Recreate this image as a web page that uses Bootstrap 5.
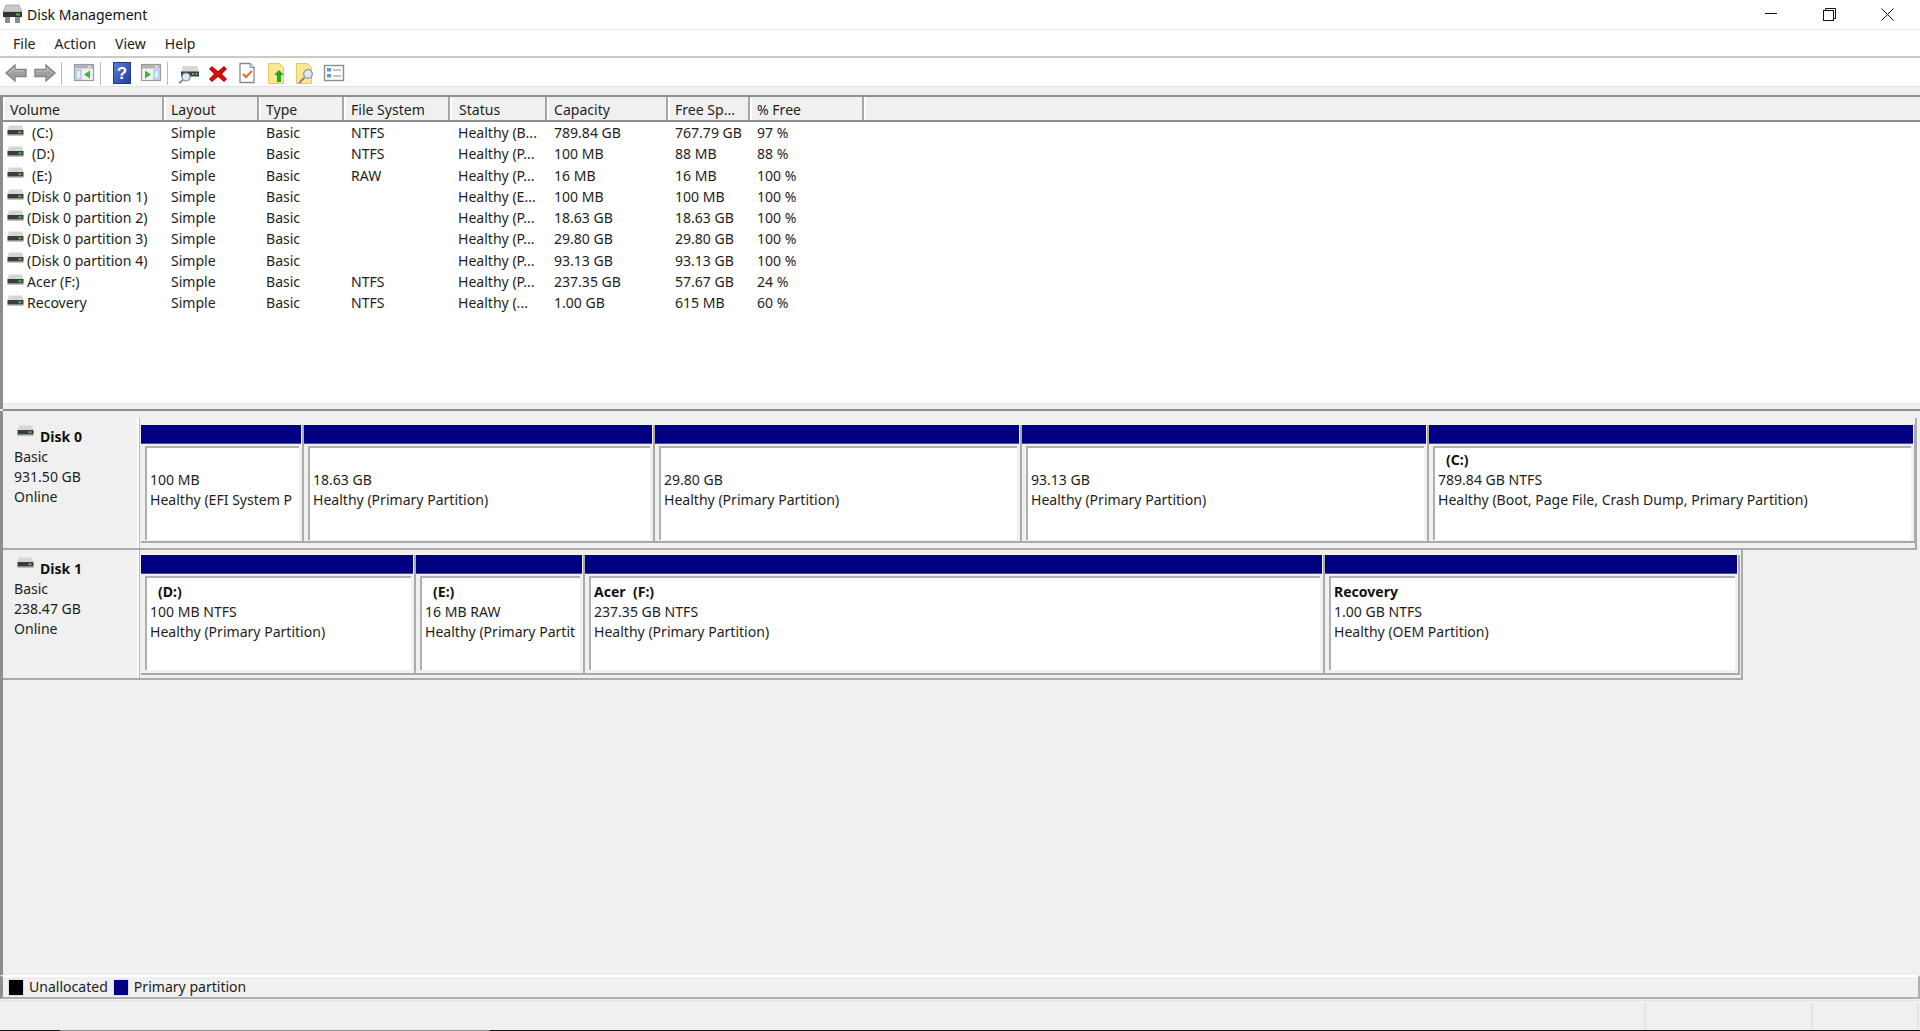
<!DOCTYPE html>
<html lang="en">
<head>
<meta charset="utf-8">
<title>Disk Management</title>
<link href="https://cdn.jsdelivr.net/npm/bootstrap@5.3.0/dist/css/bootstrap.min.css" rel="stylesheet">
<style>
html,body{height:100%;margin:0}
body{width:1920px;height:1031px;overflow:hidden;background:#f0f0f0;font-family:"Noto Sans","Open Sans",sans-serif;font-size:14.05px;color:#1e1e1e;line-height:20px}
.titlebar{height:30px;background:#fff;border-bottom:1px solid #e8e8e8;position:relative;padding-left:27px;line-height:29px;color:#111}
.appicon{position:absolute;left:2px;top:4px}
.winctl{position:absolute;top:0;right:4px;height:29px}
.winctl span{width:58px;display:flex;justify-content:center;align-items:center;height:28px}
.menubar{height:28px;background:#fff;border-bottom:2px solid #c9c9c9;padding-left:13px;gap:19px;line-height:27px}
.toolbar{height:29px;background:#fff;border-bottom:1px solid #e2e2e2;padding-left:4px;padding-top:2px;gap:5px}
.toolbar svg{width:24px;height:24px;flex:none}
.tsep{width:1px;height:23px;background:#bcbcbc;margin:0 4px 0 -1px;flex:none}
.tsep1{margin-right:5px}
.gapband{height:8px;background:#f0f0f0}
.listpane{height:314px;background:#fff;border-left:3px solid #8e8e8e;border-top:2px solid #8e8e8e;overflow:hidden}
.voltable{table-layout:fixed;width:1917px;margin:0;--bs-table-bg:transparent;--bs-table-color:#1e1e1e;color:#1e1e1e;font-size:14.05px;background:#fff}
.voltable th{font-weight:400;background:#f0f0f0;height:24px;padding:2px 0 0 7px;border:0;border-right:2px solid #a6a6a6;border-bottom:2px solid #8e8e8e;box-shadow:inset 2px 0 0 #fff;line-height:20px;white-space:nowrap;overflow:hidden}
.voltable th:last-child{border-right:0}
.voltable td{padding:0 0 0 8px;height:21.3px;line-height:21.3px;border:0;white-space:nowrap;overflow:hidden}
.voltable th:nth-child(5),.voltable td:nth-child(5){padding-left:9px}
.voltable td:first-child{padding-left:7px}
.volcell{display:flex;align-items:center;margin-left:-3px}
.volcell svg{flex:none;width:17px;height:11px;margin-top:-5px}
.vn1{margin-left:8px}
.vn2{margin-left:3px}
.listfill{height:6px;background:#f0f0f0;border-top:1px solid #e6e6e6}
.splitline{height:2px;background:#8e8e8e;margin-left:3px}
.graphpane{height:564px;border-left:3px solid #8e8e8e;background:#f0f0f0;padding-top:7px;overflow:hidden}
.dskrow{height:132px;border-bottom:2px solid #aaa;border-right:2px solid #aaa;display:flex}
.dskrow+.dskrow{height:130px}
.wfull{width:1914px}
.wpart{width:1740px}
.dsklabel{width:136px;flex:none;padding:9px 0 0 11px;border-right:2px solid #fff;box-shadow:1px 0 0 #b8b8b8;line-height:20px}
.dskname{font-weight:700;padding-left:26px;position:relative;display:block;color:#111}
.dskname svg{position:absolute;left:3px;top:-2px;width:17px;height:11px}
.partwrap{display:flex;padding-top:7px;margin-left:2px;margin-bottom:5px;border-bottom:2px solid #aaa}
.dskrow+.dskrow .partwrap{padding-top:5px;margin-bottom:3px}
.volpart{flex:none;border-right:2px solid #ababab;padding-right:1px;background:#f0f0f0;overflow:hidden}
.volbar{height:19px;background:#000080;border-bottom:1px solid #555}
.volbody{margin:2px 2px 3px 4px;height:94px;background:#fff;border-top:2px solid #b0b0b0;border-left:2px solid #b0b0b0;padding:2px 0 0 3px;white-space:nowrap}
.dskrow+.dskrow .volbody{padding-top:4px}
.pname{font-weight:700;display:block;height:20px;color:#111}
.pind{padding-left:8px}
.legendbar{height:24px;background:#f0f0f0;border-top:2px solid #fff;border-bottom:2px solid #b0b0b0;border-left:3px solid #8e8e8e;border-right:2px solid #b0b0b0;padding-left:6px;line-height:20px}
.swatch{width:14px;height:15px;flex:none;margin-right:6px;outline:1px solid #ddd}
.swblack{background:#000}
.swnavy{background:#000080;margin-left:6px}
.statusbar{height:31px;margin-top:1px;border-top:1px solid #e4e4e4;background:#f0f0f0;position:relative}
.stcell{border-right:2px solid #e4e4e4;height:26px;margin-top:2px}
.stmain{width:1646px}
.stmid{width:167px}
.stend{width:106px}
.edgeline{position:absolute;left:0;right:0;bottom:0;height:1px;background:#111}
.edgegap{position:absolute;left:60px;width:430px;bottom:0;height:1px;background:#8a8a8a}
</style>
</head>
<body>
<svg width="0" height="0" class="d-block" aria-hidden="true">
<defs>
<symbol id="drv" viewBox="0 0 17 11">
<path d="M2 0.5h13l1.5 4.5H0.5z" fill="#d6d6d6"/>
<rect x="0.5" y="5" width="16" height="4.6" fill="#3c3c3c"/>
<rect x="11.5" y="6.3" width="3" height="2" fill="#44c23c"/>
<rect x="0.5" y="9.6" width="16" height="1" fill="#9a9a9a"/>
</symbol>
<symbol id="win" viewBox="0 0 24 24">
<rect x="2.500" y="3.500" width="19" height="16" fill="#f2f2f2" stroke="#9c9c9c" stroke-width="1.200"/>
<rect x="3" y="4" width="18" height="3.500" fill="#b4b4b4"/>
</symbol>
<linearGradient id="helpg" x1="0" y1="0" x2="1" y2="1"><stop offset="0" stop-color="#5a82dc"/><stop offset="1" stop-color="#1f3a9a"/></linearGradient>
</defs>
</svg>

<div class="titlebar">
<svg class="appicon" width="21" height="20" viewBox="0 0 21 20"><path d="M4 1h13l3 7H1z" fill="#c9c9c9" stroke="#8a8a8a" stroke-width=".6"/><rect x="1" y="8" width="19" height="5" fill="#333"/><rect x="14" y="9.500" width="4" height="2" fill="#48c040"/><path d="M3 13h5v6H3zM13 13h5v6h-5z" fill="#8c8c8c"/></svg>
Disk Management
<div class="winctl d-flex">
<span><svg width="12" height="2" viewBox="0 0 12 2"><rect width="12" height="1" fill="#111"/></svg></span>
<span><svg width="13" height="13" viewBox="0 0 13 13" fill="none" stroke="#111"><rect x=".5" y="2.500" width="10" height="10"/><path d="M2.500 2.500V.5h10v10h-2"/></svg></span>
<span><svg width="13" height="13" viewBox="0 0 13 13" fill="none" stroke="#111"><path d="M.5.5l12 12M12.500.5l-12 12"/></svg></span>
</div>
</div>

<nav class="menubar d-flex">
<span>File</span><span>Action</span><span>View</span><span>Help</span>
</nav>

<div class="toolbar d-flex align-items-center">
<svg viewBox="0 0 24 24"><path d="M2 12l9-8v4.500h11v7H11V20z" fill="#a0a0a0" stroke="#858585" stroke-width="1.400"/><path d="M5 12l5-5v3h10" fill="none" stroke="#c4c4c4"/></svg>
<svg viewBox="0 0 24 24"><path d="M22 12l-9-8v4.500H2v7h11V20z" fill="#a0a0a0" stroke="#858585" stroke-width="1.400"/><path d="M3 10h11V7l5 5" fill="none" stroke="#c4c4c4"/></svg>
<span class="tsep tsep1"></span>
<svg viewBox="0 0 24 24"><use href="#win"/><rect x="4" y="9" width="5" height="9" fill="#e3eefb" stroke="#7fa6d8" stroke-width=".8"/><path d="M18 9.500v8l-6-4z" fill="#3fb83a"/><rect x="16" y="5" width="3" height="1.400" fill="#eee"/></svg>
<span class="tsep"></span>
<svg viewBox="0 0 24 24"><rect x="3.500" y="1.500" width="17" height="21" fill="url(#helpg)" stroke="#1f3a8c"/><text x="12" y="18" text-anchor="middle" font-family="Liberation Sans" font-weight="700" font-size="17" fill="#fff">?</text></svg>
<svg viewBox="0 0 24 24"><use href="#win"/><rect x="15" y="9" width="5" height="9" fill="#e3eefb" stroke="#7fa6d8" stroke-width=".8"/><path d="M6 9.500v8l6-4z" fill="#3fb83a"/><rect x="16" y="5" width="3" height="1.400" fill="#eee"/></svg>
<span class="tsep"></span>
<svg viewBox="0 0 24 24"><path d="M6 5h14l2 6H4z" fill="#d8d8d8"/><rect x="4" y="10.500" width="18" height="5" fill="#3c3c3c"/><rect x="15" y="12" width="2" height="2" fill="#46c040"/><rect x="18.500" y="12" width="2" height="2" fill="#46c040"/><circle cx="9" cy="16" r="4" fill="#dce9f6" stroke="#8a8a8a" stroke-width="1.200"/><path d="M6 19l-4 3" stroke="#8c8c8c" stroke-width="2"/></svg>
<svg viewBox="0 0 24 24"><path d="M6 6l6 5 6-5 2 2-5 5 5 5-2 2-6-5-6 5-2-2 5-5-5-5z" fill="#d01616" stroke="#c00" stroke-width="1.400"/></svg>
<svg viewBox="0 0 24 24"><path d="M5 2.500h10l4 4v15H5z" fill="#fff" stroke="#8a8a8a" stroke-width="1.300"/><path d="M15 2.500v4h4" fill="#e8e8e8" stroke="#8a8a8a"/><path d="M8 13l3 3 6-6" fill="none" stroke="#e86a2a" stroke-width="2"/></svg>
<svg viewBox="0 0 24 24"><path d="M4.500 2.500h11l4 4v16h-15z" fill="#fbe694" stroke="#e8c860"/><path d="M14 14h-3l5-5 5 5h-3v7h-4z" transform="translate(-1 0)" fill="#28a428"/></svg>
<svg viewBox="0 0 24 24"><path d="M3.500 2.500h11l4 4v16h-15z" fill="#fbe694" stroke="#e8c860"/><circle cx="15" cy="13" r="4.300" fill="#dce9f6" stroke="#8a9aaa" stroke-width="1.300"/><path d="M11.500 16.500L6 22" stroke="#9a8a70" stroke-width="2.200"/></svg>
<svg viewBox="0 0 24 24"><rect x="2.500" y="4.500" width="19" height="15" fill="#fdfdfd" stroke="#8e8e8e" stroke-width="1.400"/><rect x="5" y="7" width="4" height="3.500" fill="#5b9ae0"/><rect x="5" y="13" width="4" height="3.500" fill="#5b9ae0"/><path d="M11 9h8M11 15h8" stroke="#b0b0b0" stroke-width="1.400"/></svg>
</div>
<div class="gapband"></div>

<section class="listpane d-flex flex-column">
<div class="flex-grow-1">
<table class="table table-borderless voltable">
<colgroup><col style="width:160px"><col style="width:95px"><col style="width:85px"><col style="width:106px"><col style="width:97px"><col style="width:121px"><col style="width:82px"><col style="width:114px"><col></colgroup>
<thead><tr><th>Volume</th><th>Layout</th><th>Type</th><th>File System</th><th>Status</th><th>Capacity</th><th>Free Sp...</th><th>% Free</th><th></th></tr></thead>
<tbody>
<tr><td><div class="volcell"><svg><use href="#drv"/></svg><span class="vn1">(C:)</span></div></td><td>Simple</td><td>Basic</td><td>NTFS</td><td>Healthy (B...</td><td>789.84 GB</td><td>767.79 GB</td><td>97 %</td><td></td></tr>
<tr><td><div class="volcell"><svg><use href="#drv"/></svg><span class="vn1">(D:)</span></div></td><td>Simple</td><td>Basic</td><td>NTFS</td><td>Healthy (P...</td><td>100 MB</td><td>88 MB</td><td>88 %</td><td></td></tr>
<tr><td><div class="volcell"><svg><use href="#drv"/></svg><span class="vn1">(E:)</span></div></td><td>Simple</td><td>Basic</td><td>RAW</td><td>Healthy (P...</td><td>16 MB</td><td>16 MB</td><td>100 %</td><td></td></tr>
<tr><td><div class="volcell"><svg><use href="#drv"/></svg><span class="vn2">(Disk 0 partition 1)</span></div></td><td>Simple</td><td>Basic</td><td></td><td>Healthy (E...</td><td>100 MB</td><td>100 MB</td><td>100 %</td><td></td></tr>
<tr><td><div class="volcell"><svg><use href="#drv"/></svg><span class="vn2">(Disk 0 partition 2)</span></div></td><td>Simple</td><td>Basic</td><td></td><td>Healthy (P...</td><td>18.63 GB</td><td>18.63 GB</td><td>100 %</td><td></td></tr>
<tr><td><div class="volcell"><svg><use href="#drv"/></svg><span class="vn2">(Disk 0 partition 3)</span></div></td><td>Simple</td><td>Basic</td><td></td><td>Healthy (P...</td><td>29.80 GB</td><td>29.80 GB</td><td>100 %</td><td></td></tr>
<tr><td><div class="volcell"><svg><use href="#drv"/></svg><span class="vn2">(Disk 0 partition 4)</span></div></td><td>Simple</td><td>Basic</td><td></td><td>Healthy (P...</td><td>93.13 GB</td><td>93.13 GB</td><td>100 %</td><td></td></tr>
<tr><td><div class="volcell"><svg><use href="#drv"/></svg><span class="vn2">Acer (F:)</span></div></td><td>Simple</td><td>Basic</td><td>NTFS</td><td>Healthy (P...</td><td>237.35 GB</td><td>57.67 GB</td><td>24 %</td><td></td></tr>
<tr><td><div class="volcell"><svg><use href="#drv"/></svg><span class="vn2">Recovery</span></div></td><td>Simple</td><td>Basic</td><td>NTFS</td><td>Healthy (...</td><td>1.00 GB</td><td>615 MB</td><td>60 %</td><td></td></tr>
</tbody>
</table>
</div>
<div class="listfill"></div>
</section>
<div class="splitline"></div>

<section class="graphpane">
<div class="dskrow wfull">
<div class="dsklabel"><span class="dskname"><svg><use href="#drv"/></svg>Disk 0</span>Basic<br>931.50 GB<br>Online</div>
<div class="partwrap">
<div class="volpart" style="width:163px"><div class="volbar"></div><div class="volbody"><span class="pname"></span>100 MB<br>Healthy (EFI System P</div></div>
<div class="volpart" style="width:351px"><div class="volbar"></div><div class="volbody"><span class="pname"></span>18.63 GB<br>Healthy (Primary Partition)</div></div>
<div class="volpart" style="width:367px"><div class="volbar"></div><div class="volbody"><span class="pname"></span>29.80 GB<br>Healthy (Primary Partition)</div></div>
<div class="volpart" style="width:407px"><div class="volbar"></div><div class="volbody"><span class="pname"></span>93.13 GB<br>Healthy (Primary Partition)</div></div>
<div class="volpart" style="width:487px"><div class="volbar"></div><div class="volbody"><span class="pname pind">(C:)</span>789.84 GB NTFS<br>Healthy (Boot, Page File, Crash Dump, Primary Partition)</div></div>
</div>
</div>
<div class="dskrow wpart">
<div class="dsklabel"><span class="dskname"><svg><use href="#drv"/></svg>Disk 1</span>Basic<br>238.47 GB<br>Online</div>
<div class="partwrap">
<div class="volpart" style="width:275px"><div class="volbar"></div><div class="volbody"><span class="pname pind">(D:)</span>100 MB NTFS<br>Healthy (Primary Partition)</div></div>
<div class="volpart" style="width:169px"><div class="volbar"></div><div class="volbody"><span class="pname pind">(E:)</span>16 MB RAW<br>Healthy (Primary Partit</div></div>
<div class="volpart" style="width:740px"><div class="volbar"></div><div class="volbody"><span class="pname">Acer&nbsp; (F:)</span>237.35 GB NTFS<br>Healthy (Primary Partition)</div></div>
<div class="volpart" style="width:415px"><div class="volbar"></div><div class="volbody"><span class="pname">Recovery</span>1.00 GB NTFS<br>Healthy (OEM Partition)</div></div>
</div>
</div>
</section>

<footer class="legendbar d-flex align-items-center">
<span class="swatch swblack"></span><span>Unallocated</span>
<span class="swatch swnavy"></span><span>Primary partition</span>
</footer>
<div class="statusbar d-flex">
<div class="stcell stmain"></div><div class="stcell stmid"></div><div class="stcell stend"></div>
<span class="edgeline"></span><span class="edgegap"></span>
</div>
<script src="https://cdn.jsdelivr.net/npm/bootstrap@5.3.0/dist/js/bootstrap.bundle.min.js"></script>
</body>
</html>
